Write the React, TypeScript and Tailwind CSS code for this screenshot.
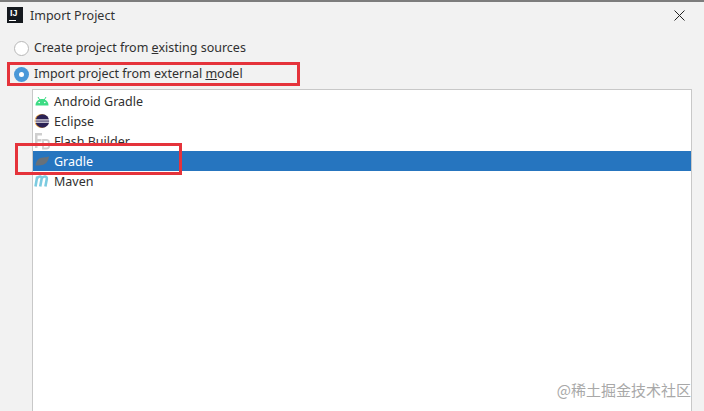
const font = { fontFamily: '"Noto Sans", "Open Sans", sans-serif' };

function IdeaLogo() {
  return (
    <div className="relative w-[16px] h-[16px] bg-[#15191e] shrink-0">
      <span className="absolute left-[3px] top-[1px] text-[9px] leading-[10px] font-bold text-white font-['Liberation_Sans',sans-serif]">
        IJ
      </span>
      <span className="absolute left-[2px] bottom-[2px] w-[7px] h-px bg-white" />
    </div>
  );
}

function AndroidIcon() {
  return (
    <svg width="16" height="16" viewBox="0 0 16 16">
      <path d="M1.5 12.5 C1.5 8.5 4.5 6 8 6 C11.5 6 14.5 8.5 14.5 12.5 Z" fill="#3ddc84" />
      <path d="M4 4 L5.8 7 M12 4 L10.2 7" stroke="#3ddc84" strokeWidth="1" />
      <circle cx="5.2" cy="9.5" r="0.8" fill="#fff" />
      <circle cx="10.8" cy="9.5" r="0.8" fill="#fff" />
    </svg>
  );
}

function EclipseIcon() {
  return (
    <svg width="16" height="16" viewBox="0 0 16 16">
      <circle cx="7.6" cy="8" r="7" fill="#e8a33d" />
      <circle cx="8.4" cy="8" r="6.8" fill="#2c2255" />
      <rect x="1" y="6.4" width="14.5" height="1.1" fill="#fff" />
      <rect x="1" y="8.6" width="14.5" height="1.1" fill="#fff" />
    </svg>
  );
}

function FlashIcon() {
  return (
    <svg width="16" height="18" viewBox="0 0 16 18">
      <path d="M1 1 H8 V3.5 H3.5 V7 H7.5 V9.5 H3.5 V16 H1 Z" fill="#cfcfcf" />
      <path
        d="M9 8 H12.5 C15.5 8 15.5 11.6 13.5 12 C16 12.6 15.5 16.5 12.5 16.5 H9 Z"
        fill="none"
        stroke="#cfcfcf"
        strokeWidth="1.8"
      />
    </svg>
  );
}

function GradleIcon() {
  return (
    <svg width="16" height="14" viewBox="0 0 16 14">
      <path
        d="M1.5 11.5 C2 7 5 3.5 9 3.5 C11 3.5 13 3 15 2.5 C14.5 5.5 13.5 8 11.5 9.5 C9 11.5 5 11.5 1.5 11.5 Z"
        fill="#67717a"
      />
    </svg>
  );
}

function MavenIcon() {
  return (
    <svg width="16" height="14" viewBox="0 0 16 14">
      <path
        d="M1.5 12.5 L3.2 2.5 M3 4.5 C5 1.5 8.2 2 7.6 5 L6.2 12.5 M7.6 4.5 C9.6 1.5 13.4 2 12.8 5 L11.4 12.5"
        fill="none"
        stroke="#7ccbe0"
        strokeWidth="2.6"
      />
    </svg>
  );
}

const rows = [
  { name: 'Android Gradle', icon: <AndroidIcon /> },
  { name: 'Eclipse', icon: <EclipseIcon /> },
  { name: 'Flash Builder', icon: <FlashIcon /> },
  { name: 'Gradle', icon: <GradleIcon />, selected: true },
  { name: 'Maven', icon: <MavenIcon /> },
];

export default function App() {
  return (
    <div
      className="relative w-[704px] h-[411px] overflow-hidden bg-[#f2f2f2] border-t-2 border-[#7d7d7d] text-[12.5px] text-[#303030]"
      style={font}
    >
      {/* title bar */}
      <div className="flex items-center h-[26px] pl-[7px] pr-[19px]">
        <IdeaLogo />
        <span className="ml-[7px] pt-[2px] text-[#333]">Import Project</span>
        <svg className="ml-auto" width="11" height="11" viewBox="0 0 11 11">
          <path d="M0.5 0.5 L10.5 10.5 M10.5 0.5 L0.5 10.5" stroke="#222" strokeWidth="1" />
        </svg>
      </div>

      {/* radios */}
      <div className="flex flex-col mt-[7px] pl-[14px]">
        <label className="flex items-center h-[26px] gap-[5px]">
          <span className="w-[15px] h-[15px] rounded-full bg-white border border-[#b8b8b8]" />
          <span>
            Create project from <span className="underline">e</span>xisting sources
          </span>
        </label>
        <label className="flex items-center h-[26px] gap-[5px]">
          <span className="flex items-center justify-center w-[15px] h-[15px] rounded-full bg-[#4a98d8]">
            <span className="w-[5px] h-[5px] rounded-full bg-white" />
          </span>
          <span>
            Import project from external <span className="underline">m</span>odel
          </span>
        </label>
      </div>

      {/* list */}
      <div className="mt-[2px] ml-[32px] mr-[12px] h-[330px] bg-white border border-[#c8c8c8] pt-[1px]">
        {rows.map(row => (
          <div
            key={row.name}
            className={`flex items-center h-[20px] pl-[1px] gap-[4px] ${row.selected ? 'bg-[#2675bf] text-white' : ''}`}
          >
            <span className="flex items-center justify-center w-[16px] h-[16px]">{row.icon}</span>
            <span className="pt-[2px]">{row.name}</span>
          </div>
        ))}
      </div>

      {/* red annotations */}
      <div className="absolute left-[7px] top-[60px] w-[293px] h-[24px] border-[3px] border-[#e5333b]" />
      <div className="absolute left-[15px] top-[141px] w-[167px] h-[32px] border-[3px] border-[#e5333b]" />

      {/* watermark */}
      <div className="absolute right-[13px] top-[378px] text-[15px] leading-[20px] text-[#a8a8a8] font-['Noto_Sans_CJK_SC',sans-serif]">
        @稀土掘金技术社区
      </div>
    </div>
  );
}
